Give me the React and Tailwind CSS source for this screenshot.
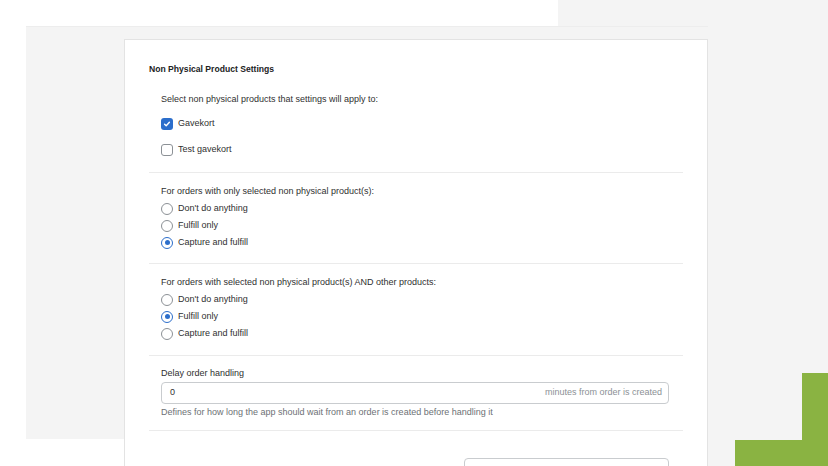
import React from "react";

function Checkbox({ checked, label }) {
  return (
    <div className="flex h-[26px] items-center gap-[5px]">
      {checked ? (
        <span className="flex h-[12px] w-[12px] items-center justify-center rounded-[3px] bg-[#2c6ecb]">
          <svg width="8" height="8" viewBox="0 0 8 8" fill="none">
            <path d="M1.6 4.2 3.2 5.8 6.4 2.2" stroke="#fff" strokeWidth="1.4" strokeLinecap="round" strokeLinejoin="round" />
          </svg>
        </span>
      ) : (
        <span className="h-[12px] w-[12px] rounded-[3px] border border-[#8c9196] bg-white" />
      )}
      <span>{label}</span>
    </div>
  );
}

function Radio({ checked, label }) {
  return (
    <div className="flex h-[17px] items-center gap-[5px]">
      {checked ? (
        <span className="flex h-[12px] w-[12px] items-center justify-center rounded-full border border-[#2c6ecb] bg-white">
          <span className="h-[5px] w-[5px] rounded-full bg-[#2c6ecb]" />
        </span>
      ) : (
        <span className="h-[12px] w-[12px] rounded-full border border-[#8c9196] bg-white" />
      )}
      <span>{label}</span>
    </div>
  );
}

function RadioGroup({ title, value, className }) {
  const options = ["Don't do anything", "Fulfill only", "Capture and fulfill"];
  return (
    <div className={"border-b border-[#ebebeb] pl-3 pr-[14px] " + className}>
      <div className="flex h-[17px] items-center">{title}</div>
      {options.map((o) => (
        <Radio key={o} label={o} checked={o === value} />
      ))}
    </div>
  );
}

export default function App() {
  return (
    <div className="flex h-[466px] w-[828px] flex-col overflow-hidden bg-white font-['Liberation_Sans',Arial,sans-serif] text-[9px] text-[#303030]">
      {/* top strip */}
      <div className="flex h-[26px] shrink-0">
        <div className="w-[558px] bg-white" />
        <div className="flex-1 bg-[#f4f4f4]" />
      </div>

      <div className="flex min-h-0 flex-1">
        <div className="w-[26px] shrink-0 bg-white" />

        {/* left gutter */}
        <div className="flex w-[98px] shrink-0 flex-col">
          <div className="h-[413px] border-t border-[#ededed] bg-[#f4f4f4]" />
        </div>

        {/* settings card column */}
        <div className="flex w-[584px] shrink-0 flex-col overflow-hidden border-t border-[#ededed] bg-[#f4f4f4] pt-[12px]">
          <div className="flex-1 border border-b-0 border-[#e3e3e3] bg-white px-[24px] pt-[21px]">
            <div className="flex h-[17px] items-center text-[8.6px] font-bold text-[#202223]">
              Non Physical Product Settings
            </div>

            <div className="border-b border-[#ebebeb] pb-[9px] pl-3 pr-[14px] pt-[13px]">
              <div className="flex h-[17px] items-center">
                Select non physical products that settings will apply to:
              </div>
              <div className="mt-[3px]">
                <Checkbox checked label="Gavekort" />
                <Checkbox label="Test gavekort" />
              </div>
            </div>

            <RadioGroup
              className="pb-[12px] pt-[10px]"
              title="For orders with only selected non physical product(s):"
              value="Capture and fulfill"
            />

            <RadioGroup
              className="pb-[13px] pt-[10px]"
              title="For orders with selected non physical product(s) AND other products:"
              value="Fulfill only"
            />

            <div className="border-b border-[#ebebeb] pb-[9px] pl-3 pr-[14px] pt-[9px]">
              <div className="flex h-[17px] items-center">Delay order handling</div>
              <div className="flex h-[22px] items-center justify-between rounded-[4px] border border-[#c9cccf] pl-[8px] pr-[6px]">
                <span>0</span>
                <span className="text-[#8c9196]">minutes from order is created</span>
              </div>
              <div className="flex h-[17px] items-center text-[#6d7175]">
                Defines for how long the app should wait from an order is created before handling it
              </div>
            </div>

            <div className="flex justify-end pl-3 pr-[14px] pt-[27px]">
              <div className="h-[22px] w-[205px] rounded-[4px] border border-[#c9cccf]" />
            </div>
          </div>
        </div>

        {/* right gutter with accent */}
        <div className="flex flex-1 flex-col items-end justify-end bg-[#f4f4f4]">
          <div className="h-[67px] w-[26px] bg-[#8ab342]" />
          <div className="h-[26px] w-[93px] bg-[#8ab342]" />
        </div>
      </div>
    </div>
  );
}
